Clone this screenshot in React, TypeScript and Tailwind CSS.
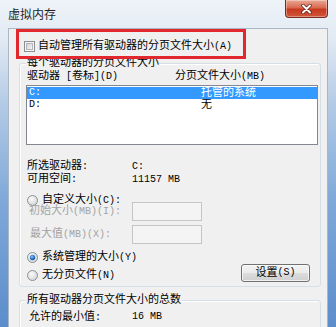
import React from "react";

const cjk = { fontFamily: '"Liberation Mono", "Noto Sans CJK SC", monospace' };

// SimSun-like: half-width latin runs are a touch smaller than the CJK glyphs
const T = ({ children }: { children: string }) => (
  <>
    {children.split(/([\x20-\x7e]+)/).map((part, i) =>
      /^[\x20-\x7e]+$/.test(part) ? (
        <span key={i} className="text-[10px]">
          {part}
        </span>
      ) : (
        <React.Fragment key={i}>{part}</React.Fragment>
      )
    )}
  </>
);

const Radio = ({ checked, id }: { checked?: boolean; id: string }) => (
  <svg width="11" height="11" viewBox="0 0 11 11" className="shrink-0">
    <defs>
      <radialGradient id={`rf-${id}`} cx="0.4" cy="0.35" r="0.7">
        <stop offset="0" stopColor="#fbfbfb" />
        <stop offset="1" stopColor="#d2d4d6" />
      </radialGradient>
      <radialGradient id={`rd-${id}`} cx="0.4" cy="0.35" r="0.7">
        <stop offset="0" stopColor="#8cc4f5" />
        <stop offset="0.6" stopColor="#2c78cc" />
        <stop offset="1" stopColor="#0d4a93" />
      </radialGradient>
    </defs>
    <circle cx="5.5" cy="5.5" r="5" fill={`url(#rf-${id})`} stroke="#8d9093" strokeWidth="1" />
    {checked && <circle cx="5.5" cy="5.5" r="2.7" fill={`url(#rd-${id})`} />}
  </svg>
);

const CheckBox = () => (
  <svg width="11" height="11" viewBox="0 0 11 11" className="shrink-0">
    <defs>
      <linearGradient id="cbg" x1="0" y1="0" x2="1" y2="1">
        <stop offset="0" stopColor="#cdd0d4" />
        <stop offset="1" stopColor="#f7f7f7" />
      </linearGradient>
    </defs>
    <rect x="0.5" y="0.5" width="10" height="10" fill="#f4f4f4" stroke="#8e8f8f" />
    <rect x="2.5" y="2.5" width="6" height="6" fill="url(#cbg)" stroke="#b3b6ba" />
  </svg>
);

export default function App() {
  return (
    <div
      className="relative w-[336px] h-[327px] overflow-hidden bg-[linear-gradient(180deg,#eef3f8_0%,#e2eaf3_12%,#b3cae5_32%,#7ea8d8_62%,#5c8dcb_100%)] text-[11px] leading-none text-black"
      style={cjk}
    >
      {/* title bar */}
      <div className="flex h-[28px] justify-between pl-[8px] pr-[8px]">
        <span className="self-center text-[12px] text-[#1e1e1e]" style={{ fontFamily: '"Noto Sans CJK SC", sans-serif' }}>
          虚拟内存
        </span>
        <div className="flex h-[18px] w-[43px] items-center justify-center rounded-b-[4px] border border-t-0 border-[#7a2a1e] bg-[linear-gradient(180deg,#eaa896_0%,#d96a50_45%,#c6391f_55%,#d2563a_100%)] shadow-[inset_0_0_0_1px_rgba(255,255,255,0.35)]">
          <svg width="11" height="10" viewBox="0 0 11 10">
            <path d="M2 1.5 L9 8.5 M9 1.5 L2 8.5" stroke="#5b1c12" strokeWidth="3.4" strokeLinecap="round" />
            <path d="M2 1.5 L9 8.5 M9 1.5 L2 8.5" stroke="#ffffff" strokeWidth="2" strokeLinecap="round" />
          </svg>
        </div>
      </div>

      {/* client */}
      <div className="ml-[8px] h-[299px] w-[320px] bg-[#f0f0f0] pt-[11px] shadow-[inset_1px_1px_0_#a9b7c6,inset_-1px_0_0_#a9b7c6]">
        <div className="flex h-[14px] items-center pl-[16px]">
          <CheckBox />
          <span className="ml-[3px]">
            <T>自动管理所有驱动器的分页文件大小(A)</T>
          </span>
        </div>

        {/* group 1 */}
        <div className="relative ml-[11px] mt-[10px] h-[224px] w-[302px] rounded-[3px] border border-[#d5dfe5] shadow-[inset_1px_1px_0_#ffffff]">
          <span className="absolute left-[6px] top-[-8px] flex h-[14px] items-center bg-[#f0f0f0] px-[1px]">
            每个驱动器的分页文件大小
          </span>
          <div className="mt-[5px] flex h-[14px] items-center pl-[7px]">
            <span className="w-[148px]">
              <T>驱动器 [卷标](D)</T>
            </span>
            <span>
              <T>分页文件大小(MB)</T>
            </span>
          </div>
          <div className="ml-[6px] mt-[2px] h-[60px] w-[292px] border border-[#828790] bg-white pt-[1px]">
            <div className="flex h-[12px] items-center bg-[#3399ff] pl-[2px] text-white">
              <span className="w-[172px] text-[10px]">C:</span>
              <span>托管的系统</span>
            </div>
            <div className="flex h-[12px] items-center pl-[2px]">
              <span className="w-[172px] text-[10px]">D:</span>
              <span>无</span>
            </div>
          </div>

          <div className="mt-[15px] flex h-[13px] items-center pl-[7px]">
            <span className="w-[105px]">
              <T>所选驱动器:</T>
            </span>
            <span className="text-[10px]">C:</span>
          </div>
          <div className="flex h-[13px] items-center pl-[7px]">
            <span className="w-[105px]">
              <T>可用空间:</T>
            </span>
            <span className="text-[10px]">11157 MB</span>
          </div>

          <div className="mt-[7px] flex h-[14px] items-center pl-[7px]">
            <Radio id="a" />
            <span className="ml-[4px]">
              <T>自定义大小(C):</T>
            </span>
          </div>
          <div className="-mt-[5px] flex h-[19px] items-center pl-[9px]">
            <span className="w-[103px] text-[#a3a3a3]">
              <T>初始大小(MB)(I):</T>
            </span>
            <div className="h-[19px] w-[70px] border border-[#c3c6c9] bg-[#f4f4f4]" />
          </div>
          <div className="mt-[4px] flex h-[19px] items-center pl-[9px]">
            <span className="w-[103px] pl-[1px] text-[#a3a3a3]">
              <T>最大值(MB)(X):</T>
            </span>
            <div className="h-[19px] w-[70px] border border-[#c3c6c9] bg-[#f4f4f4]" />
          </div>

          <div className="mt-[7px] flex h-[13px] items-center pl-[7px]">
            <Radio id="b" checked />
            <span className="ml-[4px]">
              <T>系统管理的大小(Y)</T>
            </span>
          </div>
          <div className="flex h-[18px] items-end justify-between pl-[7px] pr-[10px]">
            <div className="flex h-[14px] items-center">
              <Radio id="c" />
              <span className="ml-[4px]">
                <T>无分页文件(N)</T>
              </span>
            </div>
            <button className="flex h-[18px] w-[69px] items-center justify-center rounded-[3px] border border-[#707070] bg-[linear-gradient(180deg,#f2f2f2_0%,#ebebeb_50%,#dddddd_50%,#cfcfcf_100%)] text-[11px] shadow-[inset_0_0_0_1px_rgba(255,255,255,0.7)]">
              <T>设置(S)</T>
            </button>
          </div>
        </div>

        {/* group 2 */}
        <div className="relative ml-[11px] mt-[13px] h-[60px] w-[302px] rounded-[3px] border border-[#d5dfe5] shadow-[inset_1px_1px_0_#ffffff]">
          <span className="absolute left-[6px] top-[-8px] flex h-[14px] items-center bg-[#f0f0f0] px-[1px]">
            所有驱动器分页文件大小的总数
          </span>
          <div className="mt-[9px] flex h-[14px] items-center pl-[9px]">
            <span className="w-[103px]">
              <T>允许的最小值:</T>
            </span>
            <span className="text-[10px]">16 MB</span>
          </div>
        </div>
      </div>

      {/* red annotation box */}
      <div className="pointer-events-none absolute left-[16px] top-[29px] h-[30px] w-[230px] border-[3px] border-[#e0282e]" />
    </div>
  );
}
